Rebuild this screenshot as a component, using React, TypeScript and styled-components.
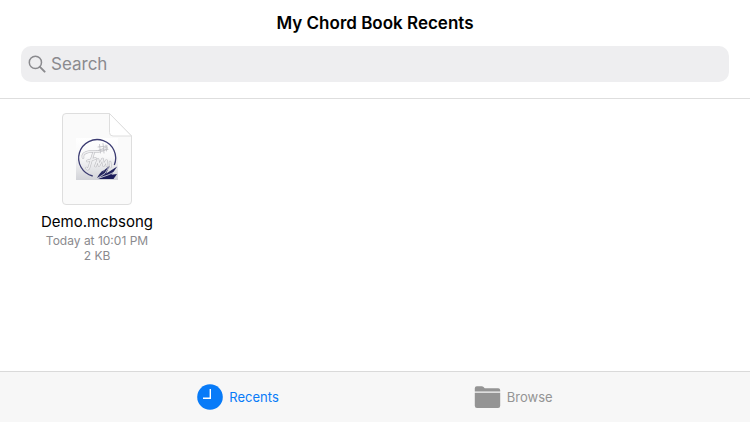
import React from "react";
import styled, { createGlobalStyle } from "styled-components";

const GlobalStyle = createGlobalStyle`
  * { box-sizing: border-box; }
  body {
    margin: 0;
    background: #fff;
    font-family: Inter, "Liberation Sans", sans-serif;
    -webkit-font-smoothing: antialiased;
  }
  button { font: inherit; border: 0; background: none; padding: 0; cursor: pointer; }
`;

const Page = styled.div`
  display: flex;
  flex-direction: column;
  min-height: 100vh;
`;

const Header = styled.header`
  display: flex;
  flex-direction: column;
  gap: 11px;
  padding: 12px 21px 16px;
  border-bottom: 1px solid #dedede;
`;

const Title = styled.h1`
  margin: 0;
  font-size: 17px;
  line-height: 23px;
  font-weight: 600;
  text-align: center;
  color: #000;
`;

const SearchField = styled.label`
  display: flex;
  align-items: center;
  gap: 5px;
  height: 36px;
  padding: 0 7px;
  border-radius: 10px;
  background: #eeeef0;
  color: #8a8a8e;
`;

const SearchInput = styled.input`
  flex: 1;
  min-width: 0;
  padding: 0;
  border: 0;
  outline: 0;
  background: transparent;
  font: 17px/22px Inter, "Liberation Sans", sans-serif;
  color: #000;
  &::placeholder { color: #8a8a8e; opacity: 1; }
`;

const Files = styled.main`
  flex: 1;
  display: flex;
  flex-wrap: wrap;
  align-items: flex-start;
  gap: 24px;
  padding: 13px 36px;
`;

const FileButton = styled.button`
  display: flex;
  flex-direction: column;
  align-items: center;
  min-width: 122px;
`;

const FileName = styled.span`
  margin-top: 6px;
  font-size: 15px;
  line-height: 20px;
  color: #000;
`;

const FileDetail = styled.span`
  font-size: 12px;
  line-height: 15px;
  color: #8a8a8e;
`;

const Details = styled.span`
  display: flex;
  flex-direction: column;
  align-items: center;
  margin-top: 1px;
`;

const TabBar = styled.nav`
  display: flex;
  justify-content: center;
  gap: 195px;
  height: 51px;
  border-top: 1px solid #dadada;
  background: #f7f7f7;
`;

const Tab = styled.button<{ $active?: boolean }>`
  display: flex;
  align-items: center;
  gap: 6px;
  color: ${(p) => (p.$active ? "#087bf8" : "#949494")};
`;

const TabLabel = styled.span`
  font-size: 13px;
  line-height: 18px;
`;

const SearchIcon = () => (
  <svg width="18" height="18" viewBox="0 0 18 18" fill="none" stroke="currentColor" aria-hidden="true">
    <circle cx="7.4" cy="7.4" r="6.1" strokeWidth="1.5" />
    <path d="M11.9 11.9l4.7 4.7" strokeWidth="2" strokeLinecap="round" />
  </svg>
);

const ClockIcon = () => (
  <svg width="26" height="26" viewBox="0 0 26 26" aria-hidden="true">
    <circle cx="13" cy="13" r="12.8" fill="currentColor" />
    <path d="M13.3 5v9.2H6" fill="none" stroke="#fff" strokeWidth="1.4" />
  </svg>
);

const FolderIcon = () => (
  <svg width="27" height="24" viewBox="0 0 27 24" fill="currentColor" aria-hidden="true">
    <path d="M.8 6.6V3.2Q.8 1.2 2.8 1.2H7.6Q8.8 1.2 9.6 2L10.2 2.7Q10.7 3.2 11.6 3.2H24.2Q26.2 3.2 26.2 5.2V6.6z" />
    <path d="M.8 7.8H26.2V20.8Q26.2 23 24 23H3Q.8 23 .8 20.8z" />
  </svg>
);

const flourish =
  "M22 45.5Q21 42 25.7 40.3T34 39.5 45.5 36M32.5 41L28 55.5Q27 58.5 25.5 56M26.5 49L34.5 46.5M34.5 54L37 47.5 38 53.5 41.5 47 42.5 53.5 45.5 48.5 46 54M49 50L49.5 55";

const SongDocument = () => (
  <svg width="72" height="94" viewBox="0 0 72 94" fill="none" aria-hidden="true">
    <defs>
      <linearGradient id="cover" x1="0" y1="0" x2="0" y2="1">
        <stop offset="0" stopColor="#fff" />
        <stop offset=".45" stopColor="#f8f8f9" />
        <stop offset="1" stopColor="#d2d3d8" />
      </linearGradient>
    </defs>
    <path d="M5 1.5H48.5L70.5 24V89Q70.5 92.5 67 92.5H5Q1.5 92.5 1.5 89V5Q1.5 1.5 5 1.5z" fill="#fafafa" stroke="#dedede" />
    <path d="M48.5 1.5V20.5Q48.5 24 52 24H70.5z" fill="#fff" stroke="#dedede" strokeLinejoin="round" />
    <rect x="15" y="26" width="42" height="42" fill="url(#cover)" />
    <path d="M31.7 64A18.5 18.5 0 1 1 53.3 53" stroke="#3c3c72" strokeWidth="1.3" />
    <g strokeLinecap="round" strokeLinejoin="round">
      <path d={flourish} stroke="#bdbdc1" strokeWidth="2.6" />
      <path d={flourish} stroke="#eeeef0" strokeWidth="1.5" />
      <path d="M38.5 32.5L39.5 41M42 31.5L43 41M45 33L45.5 39M37 35L46.5 34M37.5 38.5L47 37.5" stroke="#bdbdc1" strokeWidth=".8" />
    </g>
    <path d="M36 66Q39 60 43 58L40.5 63.5z" fill="#25265f" />
    <path d="M36 66.5L44 57.5 48.5 54 45 62z" fill="#25265f" />
    <path d="M36 66.6L46 61 56.2 54.5 50 63.5z" fill="#20205c" />
    <path d="M36 67L47 63.2 56 62 52.5 67z" fill="#1b1c59" />
    <path d="M36 66.6L44 61.4 47.5 55.5M36 66.8L47 63 54.5 59.5" stroke="#e0e1e6" strokeWidth=".8" />
  </svg>
);

export default function App() {
  return (
    <Page>
      <GlobalStyle />
      <Header>
        <Title>My Chord Book Recents</Title>
        <SearchField>
          <SearchIcon />
          <SearchInput type="search" placeholder="Search" aria-label="Search" />
        </SearchField>
      </Header>
      <Files>
        <FileButton type="button">
          <SongDocument />
          <FileName>Demo.mcbsong</FileName>
          <Details>
            <FileDetail>Today at 10:01 PM</FileDetail>
            <FileDetail>2 KB</FileDetail>
          </Details>
        </FileButton>
      </Files>
      <TabBar>
        <Tab type="button" $active aria-current="page">
          <ClockIcon />
          <TabLabel>Recents</TabLabel>
        </Tab>
        <Tab type="button">
          <FolderIcon />
          <TabLabel>Browse</TabLabel>
        </Tab>
      </TabBar>
    </Page>
  );
}
